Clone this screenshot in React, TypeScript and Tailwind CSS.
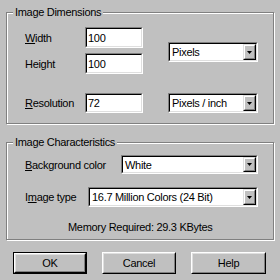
import React from 'react';

function Sunken({ className, children }: { className: string; children: React.ReactNode }) {
  return (
    <div className={`border border-t-[#808080] border-l-[#808080] border-b-white border-r-white ${className}`}>
      <div className="h-full border border-t-black border-l-black border-b-[#dfdfdf] border-r-[#dfdfdf] bg-white flex items-center">
        {children}
      </div>
    </div>
  );
}

function TextInput({ value, className }: { value: string; className: string }) {
  return (
    <Sunken className={className}>
      <span className="pl-[1px]">{value}</span>
    </Sunken>
  );
}

function Select({ value, className }: { value: string; className: string }) {
  return (
    <Sunken className={className}>
      <span className="flex-1 pl-[2px] whitespace-nowrap overflow-hidden">{value}</span>
      <div className="h-full w-[13px] border border-t-[#dfdfdf] border-l-[#dfdfdf] border-b-black border-r-black bg-[#c0c0c0]">
        <div className="h-full border border-t-white border-l-white border-b-[#808080] border-r-[#808080] flex items-center justify-center">
          <svg width="5" height="3" viewBox="0 0 5 3">
            <polygon points="0,0 5,0 2.5,3" fill="#000" />
          </svg>
        </div>
      </div>
    </Sunken>
  );
}

// etched group box; the caption sits over the top edge
function Group({ title, className, children }: { title: string; className: string; children: React.ReactNode }) {
  return (
    <div className={`relative w-[268px] border border-[#808080] shadow-[1px_1px_0_#fff,inset_1px_1px_0_#fff] ${className}`}>
      <span className="absolute -top-[7px] left-[6px] px-[2px] bg-[#c0c0c0]">{title}</span>
      {children}
    </div>
  );
}

function Button({ label, primary, className }: { label: string; primary?: boolean; className: string }) {
  return (
    <div className={`h-[22px] ${primary ? 'border border-black' : ''} ${className}`}>
      <button className="w-full h-full border border-t-white border-l-white border-b-black border-r-black bg-[#c0c0c0] p-0">
        <div className="h-full border border-t-[#dfdfdf] border-l-[#dfdfdf] border-b-[#808080] border-r-[#808080] flex items-center justify-center">
          {label}
        </div>
      </button>
    </div>
  );
}

export default function App() {
  return (
    <div className="w-[280px] h-[280px] bg-[#c0c0c0] pt-[12px] pl-[6px] text-[11px] tracking-[-0.3px] text-black font-['Liberation_Sans',Arial,sans-serif] leading-[12px]">
      {/* Image Dimensions */}
      <Group title="Image Dimensions" className="h-[112px]">
        <div className="flex pl-[18px] pt-[14px]">
          <div className="flex flex-col gap-[5px]">
            <div className="flex items-center h-[21px]">
              <span className="w-[60px]"><u>W</u>idth</span>
              <TextInput value="100" className="w-[58px] h-[21px]" />
            </div>
            <div className="flex items-center h-[21px]">
              <span className="w-[60px]">Height</span>
              <TextInput value="100" className="w-[58px] h-[21px]" />
            </div>
          </div>
          <Select value="Pixels" className="ml-[25px] mt-[15px] w-[90px] h-[20px]" />
        </div>
        <div className="flex items-center pl-[18px] mt-[19px]">
          <span className="w-[60px]"><u>R</u>esolution</span>
          <TextInput value="72" className="w-[58px] h-[20px]" />
          <Select value="Pixels / inch" className="ml-[25px] w-[90px] h-[20px]" />
        </div>
      </Group>

      {/* Image Characteristics */}
      <Group title="Image Characteristics" className="h-[98px] mt-[18px]">
        <div className="flex items-center pl-[18px] pt-[12px]">
          <span className="w-[96px]"><u>B</u>ackground color</span>
          <Select value="White" className="w-[137px] h-[19px]" />
        </div>
        <div className="flex items-center pl-[18px] mt-[13px]">
          <span className="w-[63px]">I<u>m</u>age type</span>
          <Select value="16.7 Million Colors (24 Bit)" className="w-[170px] h-[20px]" />
        </div>
        <div className="pl-[61px] mt-[14px]">Memory Required: 29.3 KBytes</div>
      </Group>

      <div className="flex gap-[15px] pl-[7px] mt-[12px]">
        <Button label="OK" primary className="w-[74px]" />
        <Button label="Cancel" className="w-[74px]" />
        <Button label="Help" className="w-[75px]" />
      </div>
    </div>
  );
}
